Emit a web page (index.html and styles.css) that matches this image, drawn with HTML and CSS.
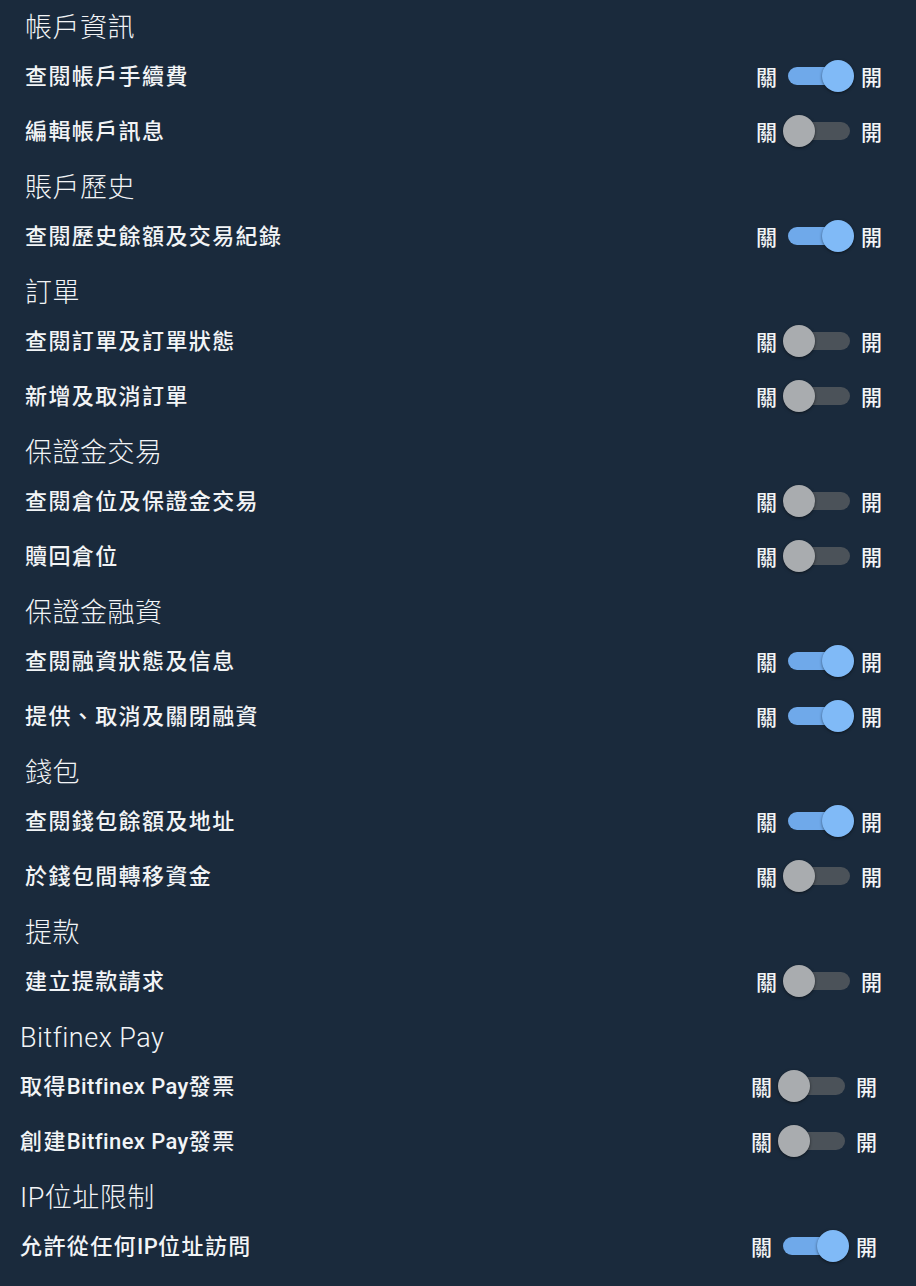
FILE: index.html
```html
<!DOCTYPE html>
<html lang="zh-tw">

<head>
    <meta charset="UTF-8">
    <meta name="viewport" content="width=device-width, initial-scale=1.0">
    <title>API 權限</title>
    <link rel="stylesheet" href="styles.css">
</head>

<body>
    <main class="perms">
        <section class="group">
            <h2 class="group-title">帳戶資訊</h2>
            <div class="row">
                <span class="row-label">查閱帳戶手續費</span>
                <div class="toggle"><span>關</span><div class="switch on"><i></i></div><span>開</span></div>
            </div>
            <div class="row">
                <span class="row-label">編輯帳戶訊息</span>
                <div class="toggle"><span>關</span><div class="switch"><i></i></div><span>開</span></div>
            </div>
        </section>

        <section class="group">
            <h2 class="group-title">賬戶歷史</h2>
            <div class="row">
                <span class="row-label">查閱歷史餘額及交易紀錄</span>
                <div class="toggle"><span>關</span><div class="switch on"><i></i></div><span>開</span></div>
            </div>
        </section>

        <section class="group">
            <h2 class="group-title">訂單</h2>
            <div class="row">
                <span class="row-label">查閱訂單及訂單狀態</span>
                <div class="toggle"><span>關</span><div class="switch"><i></i></div><span>開</span></div>
            </div>
            <div class="row">
                <span class="row-label">新增及取消訂單</span>
                <div class="toggle"><span>關</span><div class="switch"><i></i></div><span>開</span></div>
            </div>
        </section>

        <section class="group">
            <h2 class="group-title">保證金交易</h2>
            <div class="row">
                <span class="row-label">查閱倉位及保證金交易</span>
                <div class="toggle"><span>關</span><div class="switch"><i></i></div><span>開</span></div>
            </div>
            <div class="row">
                <span class="row-label">贖回倉位</span>
                <div class="toggle"><span>關</span><div class="switch"><i></i></div><span>開</span></div>
            </div>
        </section>

        <section class="group">
            <h2 class="group-title">保證金融資</h2>
            <div class="row">
                <span class="row-label">查閱融資狀態及信息</span>
                <div class="toggle"><span>關</span><div class="switch on"><i></i></div><span>開</span></div>
            </div>
            <div class="row">
                <span class="row-label">提供、取消及關閉融資</span>
                <div class="toggle"><span>關</span><div class="switch on"><i></i></div><span>開</span></div>
            </div>
        </section>

        <section class="group">
            <h2 class="group-title">錢包</h2>
            <div class="row">
                <span class="row-label">查閱錢包餘額及地址</span>
                <div class="toggle"><span>關</span><div class="switch on"><i></i></div><span>開</span></div>
            </div>
            <div class="row">
                <span class="row-label">於錢包間轉移資金</span>
                <div class="toggle"><span>關</span><div class="switch"><i></i></div><span>開</span></div>
            </div>
        </section>

        <section class="group">
            <h2 class="group-title">提款</h2>
            <div class="row">
                <span class="row-label">建立提款請求</span>
                <div class="toggle"><span>關</span><div class="switch"><i></i></div><span>開</span></div>
            </div>
        </section>

        <section class="group shifted">
            <h2 class="group-title latin">Bitfinex Pay</h2>
            <div class="row">
                <span class="row-label">取得<span class="en">Bitfinex Pay</span>發票</span>
                <div class="toggle"><span>關</span><div class="switch"><i></i></div><span>開</span></div>
            </div>
            <div class="row">
                <span class="row-label">創建<span class="en">Bitfinex Pay</span>發票</span>
                <div class="toggle"><span>關</span><div class="switch"><i></i></div><span>開</span></div>
            </div>
        </section>

        <section class="group shifted">
            <h2 class="group-title">IP位址限制</h2>
            <div class="row">
                <span class="row-label">允許從任何<span class="en">IP</span>位址訪問</span>
                <div class="toggle"><span>關</span><div class="switch on"><i></i></div><span>開</span></div>
            </div>
        </section>
    </main>
</body>

</html>
```

FILE: styles.css
```css
* {
    box-sizing: border-box;
}

body {
    background-color: #1a2a3c;
    color: #f2f4f6;
    margin: 0;
    font-family: Roboto, "Noto Sans CJK TC", sans-serif;
}

.perms {
    padding-top: 3px;
}

.group {
    padding: 0 34px 0 25px;
    margin-top: 5px;
}

.group:first-child {
    margin-top: 0;
}

.group.shifted {
    padding: 0 39px 0 20px;
}

.group-title {
    height: 45px;
    margin: 0;
    display: flex;
    align-items: center;
    font-size: 27px;
    font-weight: 300;
    letter-spacing: 0.5px;
}

.group-title.latin {
    padding-top: 5px;
}

.row {
    height: 55px;
    display: flex;
    justify-content: space-between;
    align-items: center;
}

.row-label {
    font-size: 22px;
    font-weight: 500;
    letter-spacing: 1.4px;
    padding-bottom: 3px;
}

.row-label .en {
    letter-spacing: 0.4px;
}

.toggle {
    display: flex;
    align-items: center;
    gap: 11px;
    font-size: 21px;
    font-weight: 500;
}

.switch {
    position: relative;
    width: 62px;
    height: 18px;
    border-radius: 9px;
    background-color: #4b5259;
}

.switch i {
    position: absolute;
    top: -7px;
    left: -5px;
    width: 32px;
    height: 32px;
    border-radius: 50%;
    background-color: #a9acaf;
    box-shadow: 0 1px 3px rgba(0, 0, 0, 0.5);
}

.switch.on {
    background-color: #6fa9ea;
}

.switch.on i {
    left: 34px;
    background-color: #80baf7;
}
```
